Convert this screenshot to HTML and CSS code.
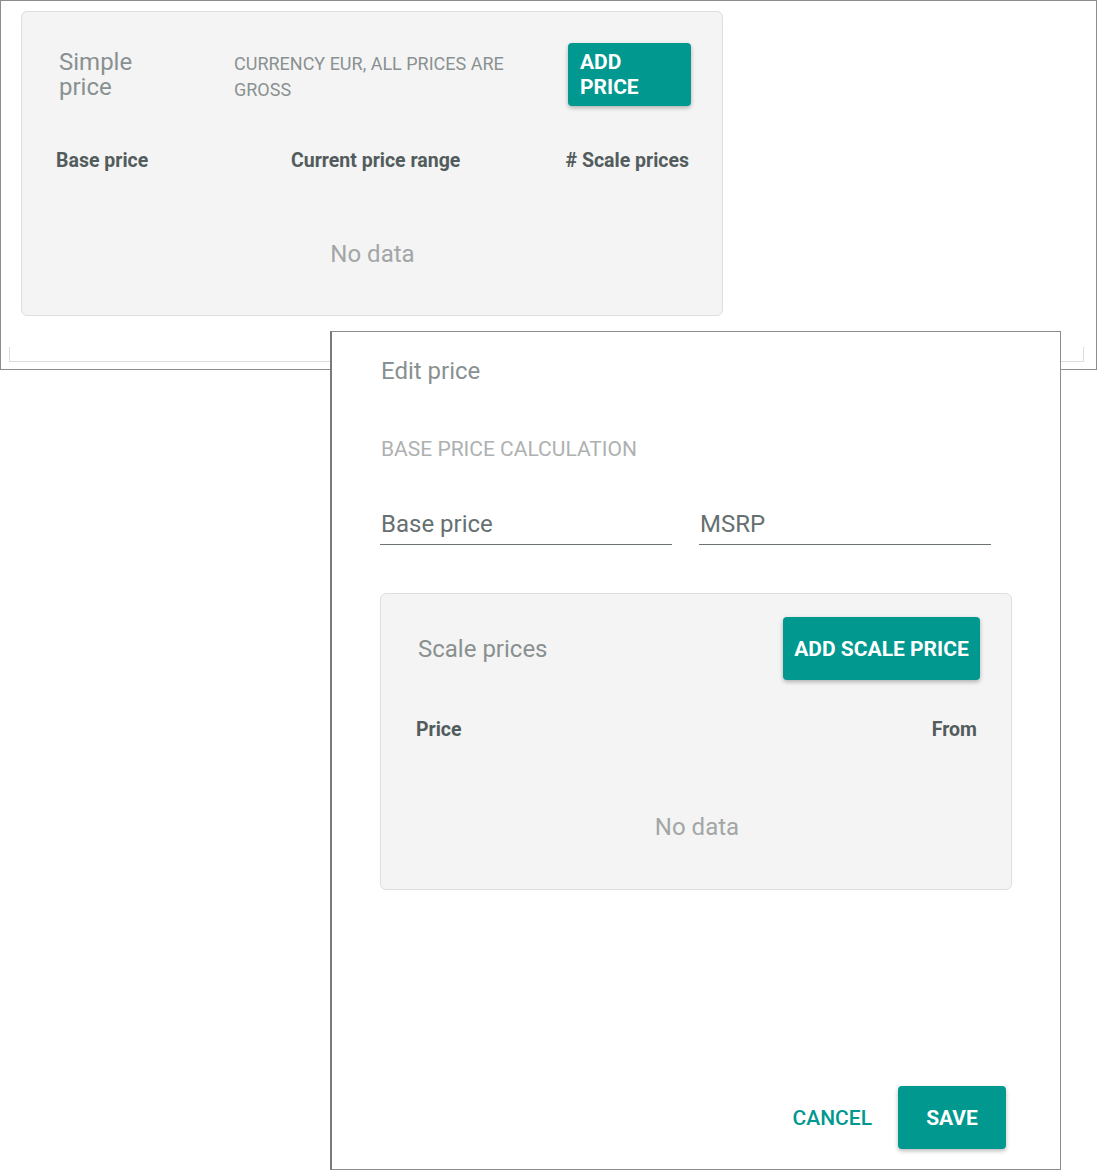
FILE: index.html
```html
<!DOCTYPE html>
<html>
<head>
<meta charset="utf-8">
<link rel="stylesheet" href="styles.css">
</head>
<body>
<div class="window">
  <div class="card">
    <div class="card-head">
      <div class="title"><div>Simple</div><div>price</div></div>
      <div class="note">CURRENCY EUR, ALL PRICES ARE GROSS</div>
      <button class="btn btn-add">ADD PRICE</button>
    </div>
    <div class="cols cols-3">
      <span>Base price</span>
      <span>Current price range</span>
      <span class="right">#&nbsp;Scale prices</span>
    </div>
    <div class="nodata nodata-top">No data</div>
  </div>
  <div class="bracket"></div>
</div>

<div class="dialog">
  <div class="dlg-title">Edit price</div>
  <div class="section">BASE PRICE CALCULATION</div>
  <div class="fields">
    <div class="field">Base price</div>
    <div class="field">MSRP</div>
  </div>
  <div class="card scale-card">
    <div class="scale-head">
      <div class="scale-title">Scale prices</div>
      <button class="btn btn-scale">ADD SCALE PRICE</button>
    </div>
    <div class="cols cols-2">
      <span>Price</span>
      <span class="right">From</span>
    </div>
    <div class="nodata nodata-scale">No data</div>
  </div>
  <div class="footer">
    <button class="btn-text">CANCEL</button>
    <button class="btn btn-save">SAVE</button>
  </div>
</div>
</body>
</html>
```

FILE: styles.css
```css
* { box-sizing: border-box; }
html, body { margin: 0; padding: 0; background: #fff; }
body {
  font-family: Roboto, "Liberation Sans", Arial, sans-serif;
  width: 1097px;
  height: 1170px;
  position: relative;
  overflow: hidden;
}

.window {
  width: 1097px;
  height: 370px;
  border: 1px solid #8c8c8c;
  padding: 10px 0 0 20px;
}

.card {
  background: #f4f4f4;
  border: 1px solid #dedede;
  border-radius: 6px;
}

.window > .card {
  width: 702px;
  height: 305px;
  padding: 31px 31px 0 34px;
}

.card-head {
  display: flex;
  align-items: center;
}

.title {
  width: 178px;
  padding-left: 3px;
  font-size: 24px;
  line-height: 25px;
  color: #899090;
}
.title div { height: 25px; }

.note {
  width: 300px;
  padding-top: 4px;
  font-size: 18px;
  line-height: 26px;
  color: #8a9191;
}

.btn {
  border: none;
  background: #00988f;
  color: #fff;
  font-family: inherit;
  font-weight: 700;
  font-size: 21px;
  border-radius: 4px;
  box-shadow: 0 2px 4px rgba(0,0,0,0.28);
  cursor: pointer;
}

.btn-add {
  margin-left: auto;
  width: 123px;
  height: 63px;
  padding: 0 12px;
  text-align: left;
  line-height: 25px;
}

.cols {
  display: flex;
  justify-content: space-between;
  font-weight: 700;
  font-size: 19.5px;
  color: #525c5c;
}

.cols-3 { margin-top: 43px; padding-right: 2px; }
.cols-3 span:nth-child(1) { width: 235px; }
.cols-3 span:nth-child(2) { flex: 1; }

.right { text-align: right; }

.nodata {
  text-align: center;
  font-size: 24px;
  color: #a3a6a6;
}
.nodata-top { margin-top: 68px; padding-right: 2px; }

.bracket {
  margin: 31px 0 0 -12px;
  width: 1075px;
  height: 15px;
  border: 1px solid #dcdcdc;
  border-top: none;
}

/* dialog (overlapping window) */
.dialog {
  position: absolute;
  left: 330px;
  top: 331px;
  width: 731px;
  height: 839px;
  background: #fff;
  border: 1px solid #8c8c8c;
  border-left: 2px solid #7a7a7a;
  padding: 25px 49px 0 48px;
  display: flex;
  flex-direction: column;
}

.dlg-title {
  padding-left: 1px;
  font-size: 24px;
  line-height: 28px;
  color: #899090;
}

.section {
  margin-top: 52px;
  padding-left: 1px;
  font-size: 21px;
  line-height: 24px;
  color: #aeb1b1;
}

.fields {
  display: flex;
  gap: 27px;
  margin-top: 49px;
  width: 611px;
}

.field {
  flex: 1;
  font-size: 24px;
  line-height: 28px;
  color: #677070;
  padding: 0 0 6px 1px;
  border-bottom: 1px solid #6b7373;
  height: 35px;
}

.scale-card {
  margin-top: 48px;
  width: 632px;
  height: 297px;
  padding: 23px 31px 0 35px;
}

.scale-head {
  display: flex;
  align-items: center;
  justify-content: space-between;
}

.scale-title {
  padding-left: 2px;
  font-size: 24px;
  color: #899090;
}

.btn-scale {
  width: 197px;
  height: 63px;
  padding: 0;
}

.cols-2 { margin-top: 38px; padding-right: 3px; }
.nodata-scale { margin-top: 72px; padding-right: 2px; }

.footer {
  margin-top: auto;
  margin-bottom: 20px;
  display: flex;
  justify-content: flex-end;
  align-items: center;
  gap: 26px;
  padding-right: 5px;
}

.btn-text {
  border: none;
  background: none;
  font-family: inherit;
  font-size: 21px;
  font-weight: 500;
  color: #00988f;
  padding: 0;
  cursor: pointer;
}

.btn-save {
  width: 108px;
  height: 63px;
}
```
